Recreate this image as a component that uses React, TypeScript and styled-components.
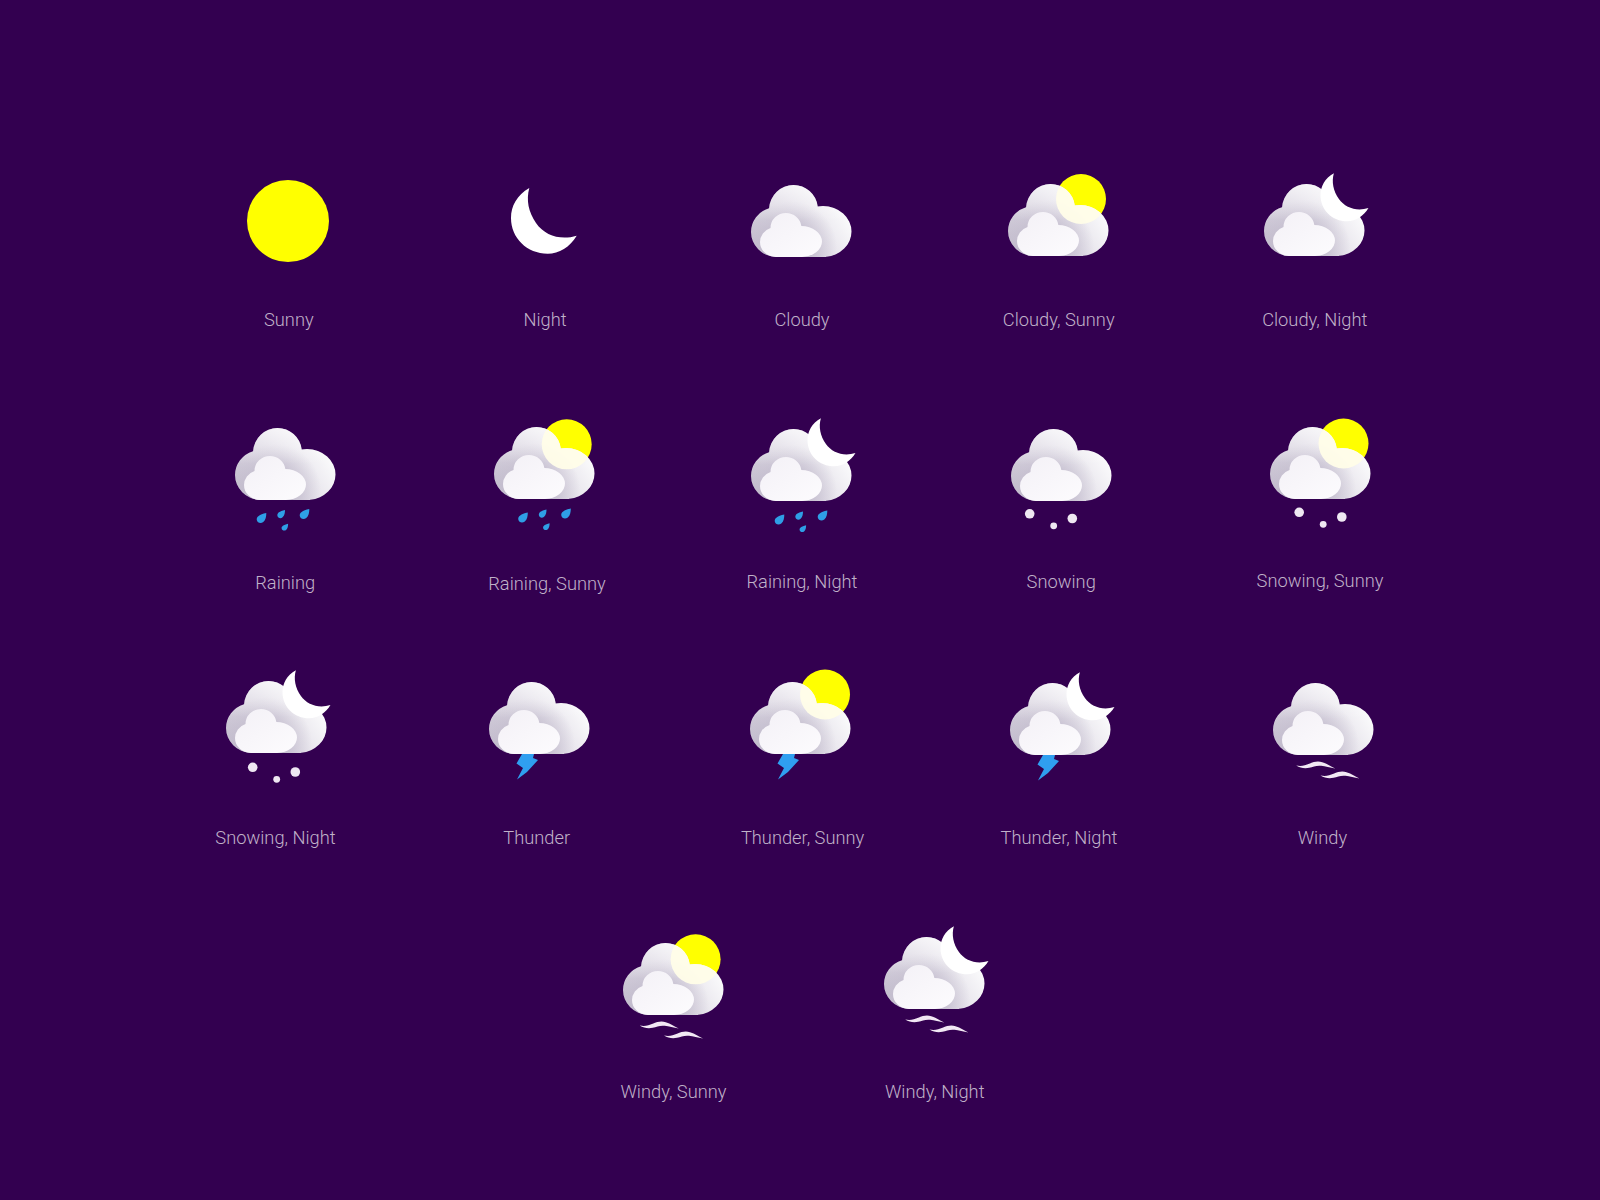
import React, { useId } from "react";
import styled, { createGlobalStyle } from "styled-components";

const GlobalStyle = createGlobalStyle`
  html, body {
    margin: 0;
    background: #330050;
  }
`;

const Page = styled.div`
  width: 1600px;
  height: 1200px;
  padding-top: 160px;
  box-sizing: border-box;
  overflow: hidden;
  background: #330050;
  font-family: Roboto, "Liberation Sans", sans-serif;
`;

const Row = styled.div<{ $height: number }>`
  display: flex;
  justify-content: center;
  height: ${(p) => p.$height}px;
  padding-left: 3px;
`;

const Cell = styled.div`
  display: flex;
  flex-direction: column;
  align-items: center;
  width: 256.5px;
  flex: none;
`;

const Canvas = styled.svg<{ $dx: number; $dy: number }>`
  display: block;
  width: 130px;
  height: 120px;
  flex: none;
  overflow: visible;
  margin-top: ${(p) => p.$dy}px;
  margin-left: ${(p) => p.$dx * 2}px;
`;

const Label = styled.span<{ $dx: number; $gap: number }>`
  display: block;
  margin-top: ${(p) => p.$gap}px;
  margin-left: ${(p) => p.$dx * 2}px;
  font-size: 18.3px;
  font-weight: 300;
  line-height: 24px;
  white-space: nowrap;
  color: #c0b2c9;
`;

const MOON =
  "M18.3 0 C6 7 0 18 0 30 C0 50 16 65.7 36.7 65.7 C48 65.7 59 59 65.7 47.7 C50 52.5 34 48 25 35 C17.5 24 15 12 18.3 0 Z";
const DROP =
  "M1 -1.1 C1 -.4 .9 .3 .4 .7 C-.1 1.1 -.8 .9 -.9 .3 C-1 -.3 -.4 -.8 1 -1.1 Z";
const WAVE =
  "M0 4.5 C5 5.5 9 4.5 13 2.8 C18 .5 22 0 26 1.2 C31 2.5 35 5.5 39 7.5 C34 6.5 29 5.2 25 4.8 C20 4.3 17 5.8 13 6.8 C8 7.8 4 6.8 0 4.5 Z";

// clouds are unions of ellipses, so the lobes stay round
const CloudShape = ({ lobes, body }: { lobes: number[][]; body: number[] }) => (
  <>
    {lobes.map(([cx, cy, rx, ry]) => (
      <ellipse key={cx} cx={cx} cy={cy} rx={rx} ry={ry} />
    ))}
    <rect x={body[0]} y={body[1]} width={body[2]} height={body[3]} />
  </>
);

const BACK_LOBES = [
  [42.5, 25, 24.5, 25],
  [26, 47, 26, 25],
  [72, 46.5, 28.5, 25.5],
];
const FRONT_LOBES = [
  [35, 43, 15.5, 15],
  [25, 57, 16, 15],
  [50, 56.5, 21, 15.5],
];

const Cloud = ({ sun, moon, children }: { sun?: [number, number]; moon?: boolean; children?: React.ReactNode }) => {
  const id = useId();
  return (
    <g transform="translate(15 20)">
      <defs>
        <clipPath id={`${id}c`}>
          <CloudShape lobes={BACK_LOBES} body={[25, 30, 50, 42]} />
        </clipPath>
        <clipPath id={`${id}d`}>
          <CloudShape lobes={FRONT_LOBES} body={[25, 50, 26, 22]} />
        </clipPath>
        <linearGradient id={`${id}b`} x1="0.95" y1="0.4" x2="0.05" y2="0.8">
          <stop offset="0" stopColor="#fbfbfc" />
          <stop offset="0.5" stopColor="#e0dce6" />
          <stop offset="1" stopColor="#cac4d3" />
        </linearGradient>
        <linearGradient id={`${id}t`} x1="0.5" y1="0" x2="0.5" y2="0.5">
          <stop offset="0" stopColor="#ffffff" stopOpacity="0.6" />
          <stop offset="1" stopColor="#ffffff" stopOpacity="0" />
        </linearGradient>
        <radialGradient id={`${id}s`} gradientUnits="userSpaceOnUse" cx={40} cy={62} r={46}>
          <stop offset="0.4" stopColor="#b5adc2" stopOpacity="0.6" />
          <stop offset="1" stopColor="#b5adc2" stopOpacity="0" />
        </radialGradient>
        <linearGradient id={`${id}f`} x1="0" y1="0" x2="1" y2="1">
          <stop offset="0" stopColor="#f3f0f6" />
          <stop offset="1" stopColor="#fdfcfe" />
        </linearGradient>
      </defs>
      {sun && <circle cx={sun[0]} cy={sun[1]} r={25} fill="#ffff00" />}
      <g clipPath={`url(#${id}c)`}>
        <rect x={0} y={0} width={101} height={72} fill={`url(#${id}b)`} />
        <rect x={0} y={0} width={101} height={72} fill={`url(#${id}s)`} />
        <rect x={0} y={0} width={101} height={72} fill={`url(#${id}t)`} />
        {sun && <circle cx={sun[0]} cy={sun[1]} r={25} fill="#fffde8" fillOpacity={0.95} />}
      </g>
      <g clipPath={`url(#${id}d)`}>
        <rect x={5} y={25} width={70} height={47} fill={`url(#${id}f)`} />
      </g>
      {moon && <path d={MOON} fill="#ffffff" transform="translate(56.5 -10.7) scale(0.73)" />}
      {children}
    </g>
  );
};

const Rain = ({ dx, dy }: { dx: number; dy: number }) => (
  <g fill="#2f9fe6" transform={`translate(${dx} ${dy})`}>
    {[
      [26.3, 89, 5],
      [46, 85, 4],
      [69.3, 85, 5],
      [49.7, 98, 3.4],
    ].map(([x, y, s]) => (
      <path key={x} d={DROP} transform={`translate(${x} ${y}) scale(${s})`} />
    ))}
  </g>
);

const Snow = ({ dx, dy }: { dx: number; dy: number }) => (
  <g fill="#efe8f2" transform={`translate(${dx} ${dy})`}>
    <circle cx={26.7} cy={86.3} r={4.8} />
    <circle cx={69.3} cy={91} r={4.8} />
    <circle cx={50.7} cy={98.3} r={3.4} />
  </g>
);

const Bolt = () => (
  <path
    fill="#2f9ff0"
    d="M33 72 L45 72 L44 76 L49 78 L38 90 L28 97.5 L34 86 L27.5 81.5 Z"
  />
);

const Wind = ({ dx }: { dx: number }) => (
  <g fill="#f2e8f4" transform={`translate(${dx} 0)`}>
    <path d={WAVE} transform="translate(16.7 78)" />
    <path d={WAVE} transform="translate(41 88)" />
  </g>
);

type Item = {
  label: string;
  kind: "sun" | "moon" | "cloud";
  sun?: [number, number];
  moon?: boolean;
  fall?: "rain" | "snow" | "bolt" | "wind";
  fallDx?: number;
  fallDy?: number;
  dx: number;
  dy: number;
  labelDx: number;
  labelY: number;
};

const rows: { height: number; items: Item[] }[] = [
  {
    height: 245,
    items: [
      { label: "Sunny", kind: "sun", dx: -1, dy: 1, labelDx: 0.3, labelY: 148 },
      { label: "Night", kind: "moon", dx: -0.7, dy: 1, labelDx: 0, labelY: 148 },
      { label: "Cloudy", kind: "cloud", dx: -0.5, dy: 4.7, labelDx: 0.5, labelY: 148 },
      { label: "Cloudy, Sunny", kind: "cloud", sun: [73, 15], dx: 0, dy: 4, labelDx: 0.7, labelY: 148 },
      { label: "Cloudy, Night", kind: "cloud", moon: true, dx: -0.5, dy: 4, labelDx: 0.3, labelY: 148 },
    ],
  },
  {
    height: 255,
    items: [
      { label: "Raining", kind: "cloud", fall: "rain", fallDy: 1.5, dx: -3.2, dy: 3.3, labelDx: -3.3, labelY: 165.7 },
      { label: "Raining, Sunny", kind: "cloud", fall: "rain", fallDx: 2.5, fallDy: 2, sun: [72.7, 17.3], dx: -0.7, dy: 1.7, labelDx: 2, labelY: 167.2 },
      { label: "Raining, Night", kind: "cloud", fall: "rain", fallDx: 2, fallDy: 2, moon: true, dx: -0.5, dy: 3.5, labelDx: 0.5, labelY: 164.6 },
      { label: "Snowing", kind: "cloud", fall: "snow", fallDx: -8, fallDy: -1.5, dx: 3, dy: 3.5, labelDx: 3.2, labelY: 164.6 },
      { label: "Snowing, Sunny", kind: "cloud", fall: "snow", fallDx: 2.5, fallDy: -1, sun: [73.5, 16.5], dx: 5, dy: 1.5, labelDx: 5.5, labelY: 164 },
    ],
  },
  {
    height: 255,
    items: [
      { label: "Snowing, Night", kind: "cloud", fall: "snow", moon: true, dx: -12.5, dy: 0.7, labelDx: -13, labelY: 165.8 },
      { label: "Thunder", kind: "cloud", fall: "bolt", dx: -6, dy: 2.3, labelDx: -8.3, labelY: 165.8 },
      { label: "Thunder, Sunny", kind: "cloud", fall: "bolt", sun: [75, 12.5], dx: -1.5, dy: 1.7, labelDx: 1.1, labelY: 165.8 },
      { label: "Thunder, Night", kind: "cloud", fall: "bolt", moon: true, dx: 2, dy: 2.6, labelDx: 1, labelY: 165.8 },
      { label: "Windy", kind: "cloud", fall: "wind", fallDx: 6.5, dx: 8.5, dy: 2.7, labelDx: 7.9, labelY: 165.8 },
    ],
  },
  {
    height: 125,
    items: [
      { label: "Windy, Sunny", kind: "cloud", fall: "wind", sun: [72.6, 16.3], dx: 0, dy: 7.7, labelDx: 0.25, labelY: 164.8 },
      { label: "Windy, Night", kind: "cloud", fall: "wind", fallDx: 4.5, moon: true, dx: 4.5, dy: 1.7, labelDx: 5, labelY: 164.8 },
    ],
  },
];

const WeatherIcon = ({ item }: { item: Item }) => {
  const fallDx = item.fallDx ?? 0;
  const fallDy = item.fallDy ?? 0;
  return (
    <Canvas $dx={item.dx} $dy={item.dy} viewBox="0 0 130 120">
      {item.kind === "sun" && <circle cx={65} cy={60} r={41} fill="#ffff00" />}
      {item.kind === "moon" && <path d={MOON} fill="#ffffff" transform="translate(32 27)" />}
      {item.kind === "cloud" && (
        <Cloud sun={item.sun} moon={item.moon}>
          {item.fall === "rain" && <Rain dx={fallDx} dy={fallDy} />}
          {item.fall === "snow" && <Snow dx={fallDx} dy={fallDy} />}
          {item.fall === "bolt" && <Bolt />}
          {item.fall === "wind" && <Wind dx={fallDx} />}
        </Cloud>
      )}
    </Canvas>
  );
};

export default function App() {
  return (
    <Page>
      <GlobalStyle />
      {rows.map((row) => (
        <Row key={row.items[0].label} $height={row.height}>
          {row.items.map((item) => (
            <Cell key={item.label}>
              <WeatherIcon item={item} />
              <Label $dx={item.labelDx} $gap={item.labelY - item.dy - 120}>
                {item.label}
              </Label>
            </Cell>
          ))}
        </Row>
      ))}
    </Page>
  );
}
